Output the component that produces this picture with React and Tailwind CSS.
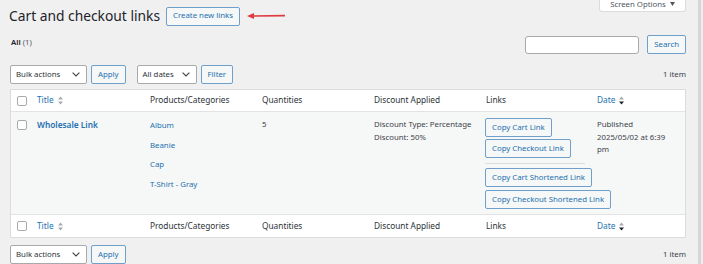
import React from 'react'

function Chevron(){
  return (
    <svg width="8" height="5" viewBox="0 0 8 5" className="shrink-0">
      <path d="M0.6 0.6 L4 4 L7.4 0.6" fill="none" stroke="#3c434a" strokeWidth="1.1" />
    </svg>
  )
}

function SortIcon({active}){
  return (
    <svg width="5" height="9" viewBox="0 0 5 9" className="ml-[4px] shrink-0">
      <path d="M2.5 0.5 L5 3.6 L0 3.6 Z" fill="#a7aaad" />
      <path d="M0 5.4 L5 5.4 L2.5 8.5 Z" fill={active ? '#1d2327' : '#a7aaad'} />
    </svg>
  )
}

function Btn({children, className=''}){
  return (
    <div className={`h-[19px] px-[6px] flex items-center rounded-[2px] border border-[#6f9fcb] bg-[#f6f7f7] text-[#2271b1] text-[7.8px] whitespace-nowrap ${className}`}>
      {children}
    </div>
  )
}

function Select({label, className=''}){
  return (
    <div className={`h-[19px] pl-[5px] pr-[6px] flex items-center justify-between rounded-[2px] border border-[#a7aaad] bg-white text-[#2c3338] text-[7.8px] ${className}`}>
      <span>{label}</span>
      <Chevron />
    </div>
  )
}

function Checkbox(){
  return <div className="w-[10px] h-[10px] rounded-[2px] border border-[#a7aaad] bg-white" />
}

function HeadRow({top}){
  return (
    <div className={`grid grid-cols-[20px_113px_112px_112px_112px_111px_1fr] items-center bg-white text-[8.3px] text-[#2c3338] ${top ? 'h-[22px] border-b border-[#e2e3e4]' : 'h-[23px] border-t border-[#e2e3e4]'}`}>
      <div className="pl-[6px]"><Checkbox /></div>
      <div className="pl-[6px] flex items-center text-[#2271b1]">Title<SortIcon /></div>
      <div className="pl-[6px]">Products/Categories</div>
      <div className="pl-[6px]">Quantities</div>
      <div className="pl-[6px]">Discount Applied</div>
      <div className="pl-[6px]">Links</div>
      <div className="pl-[6px] flex items-center text-[#2271b1]">Date<SortIcon active /></div>
    </div>
  )
}

export default function App(){
  const products = ['Album', 'Beanie', 'Cap', 'T-Shirt - Gray']
  return (
    <div className="w-[703px] h-[264px] flex overflow-hidden bg-[#f0f0f1] font-['Noto_Sans',sans-serif] text-[#3c434a]">
      <div className="w-[698px] shrink-0 pl-[10px] pr-[12px]">
        <div className="flex justify-between items-start">
          <div className="mt-[7px] h-[18px] flex items-center">
            <h1 className="text-[13.8px] text-[#1d2327] leading-none -ml-[1px]">Cart and checkout links</h1>
            <Btn className="ml-[6px] h-[18px]">Create new links</Btn>
            <svg width="40" height="8" viewBox="0 0 40 8" className="ml-[7px]">
              <path d="M6 4 L38 3.6" stroke="#e0393e" strokeWidth="1.6" />
              <path d="M0 4 L7 1 L7 7 Z" fill="#e0393e" />
            </svg>
          </div>
          <div className="w-[87px] h-[12px] flex items-start justify-center gap-[4px] bg-white border border-t-0 border-[#dcdcde] rounded-b-[3px] text-[7.8px] leading-[8px] text-[#50575e]">
            <span>Screen Options</span>
            <svg width="5" height="4" viewBox="0 0 5 4" className="mt-[2px]"><path d="M0 0 L5 0 L2.5 4 Z" fill="#50575e" /></svg>
          </div>
        </div>

        <div className="mt-[10px] flex justify-between items-start">
          <div className="mt-[2px] text-[7.8px] leading-[10px] pl-[1px]">
            <span className="font-semibold text-[#1d2327]">All</span> <span className="text-[#50575e]">(1)</span>
          </div>
          <div className="flex items-center gap-[8px]">
            <div className="w-[114px] h-[18px] rounded-[3px] border border-[#a7aaad] bg-white" />
            <Btn className="h-[18px]">Search</Btn>
          </div>
        </div>

        <div className="mt-[11px] flex items-center">
          <Select label="Bulk actions" className="w-[77px]" />
          <Btn className="ml-[4px]">Apply</Btn>
          <Select label="All dates" className="ml-[11px] w-[60px]" />
          <Btn className="ml-[4px]">Filter</Btn>
          <div className="ml-auto text-[7.8px] text-[#3c434a]">1 item</div>
        </div>

        <div className="mt-[5px] border border-[#dcdcde] bg-white">
          <HeadRow top />
          <div className="grid grid-cols-[20px_113px_112px_112px_112px_111px_1fr] bg-[#f6f7f7] text-[7.8px] pt-[6px] pb-[5px]">
            <div className="pl-[6px] pt-[2px]"><Checkbox /></div>
            <div className="pl-[6px] text-[8.3px] leading-[13px] font-semibold text-[#2271b1]">Wholesale Link</div>
            <div className="pl-[6px] flex flex-col gap-[5.5px] leading-[14px] text-[#2271b1]">
              {products.map(p => <div key={p}>{p}</div>)}
            </div>
            <div className="pl-[6px] leading-[13px]">5</div>
            <div className="pl-[6px] leading-[13px]">
              <div>Discount Type: Percentage</div>
              <div>Discount: 50%</div>
            </div>
            <div className="pl-[5px] flex flex-col items-start">
              <Btn>Copy Cart Link</Btn>
              <Btn className="mt-[2px]">Copy Checkout Link</Btn>
              <div className="mt-[5px] w-[100px] border-t border-[#dcdcde]" />
              <Btn className="mt-[4px]">Copy Cart Shortened Link</Btn>
              <Btn className="mt-[3px]">Copy Checkout Shortened Link</Btn>
            </div>
            <div className="pl-[6px] leading-[12.5px]">
              <div>Published</div>
              <div>2025/05/02 at 6:39</div>
              <div>pm</div>
            </div>
          </div>
          <HeadRow />
        </div>

        <div className="mt-[7px] flex items-center">
          <Select label="Bulk actions" className="w-[77px]" />
          <Btn className="ml-[4px]">Apply</Btn>
          <div className="ml-auto text-[7.8px] text-[#3c434a]">1 item</div>
        </div>
      </div>
      <div className="w-[3px] shrink-0 bg-[#d6d6d7]" />
      <div className="flex-1 bg-[#ededee]" />
    </div>
  )
}
